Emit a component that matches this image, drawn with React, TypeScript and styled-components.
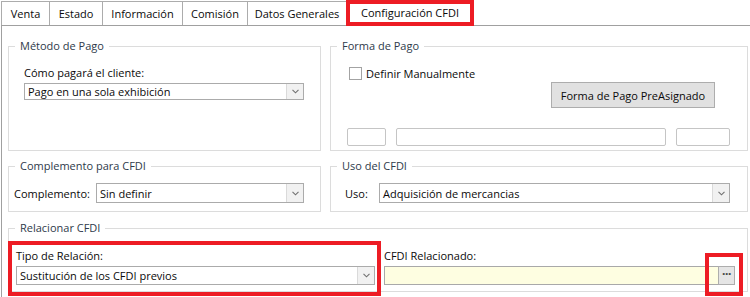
import * as React from "react";
import styled, { createGlobalStyle } from "styled-components";

const GlobalStyle = createGlobalStyle`
  html, body {
    margin: 0;
    padding: 0;
    background: #fff;
  }
  body {
    font-family: "Open Sans", "Noto Sans", sans-serif;
    font-size: 11px;
    color: #0a0a0a;
  }
`;

const ANNOTATION = "#ed1c24";

const Window = styled.div`
  width: 750px;
  height: 297px;
  overflow: hidden;
  padding-left: 1px;
  box-sizing: border-box;
`;

const TabBar = styled.div`
  display: flex;
  align-items: flex-end;
  height: 25px;
`;

const Tab = styled.div<{ $width: number; $active?: boolean }>`
  box-sizing: border-box;
  width: ${p => p.$width}px;
  text-align: center;
  white-space: nowrap;
  background: #fff;
  & + & {
    margin-left: -1px;
  }
  ${p =>
    p.$active
      ? `
    position: relative;
    height: 26px;
    margin-bottom: -1px;
    border: 4px solid ${ANNOTATION};
    line-height: 18px;
  `
      : `
    height: 24px;
    border: 1px solid #acacac;
    border-bottom: none;
    line-height: 24px;
  `}
`;

const Panel = styled.div`
  border-top: 1px solid #a0a0a0;
  border-left: 1px solid #a0a0a0;
  height: 280px;
  padding: 20px 0 0 6px;
  display: grid;
  grid-template-columns: 313px 418px;
  grid-template-rows: 105px 46px 65px;
  column-gap: 9px;
  row-gap: 15px;
  align-content: start;
`;

const Group = styled.section<{ $span?: boolean }>`
  box-sizing: border-box;
  border: 1px solid #dcdcdc;
  display: flex;
  flex-direction: column;
  min-width: 0;
  ${p => p.$span && "grid-column: 1 / -1; margin-top: 1px;"}
`;

const Legend = styled.span`
  align-self: flex-start;
  margin: -8px 0 0 6px;
  padding: 0 5px;
  height: 14px;
  line-height: 14px;
  background: #fff;
  color: #2e3a4a;
`;

const Body = styled.div<{ $pl: number; $pr: number }>`
  padding: 0 ${p => p.$pr}px 0 ${p => p.$pl}px;
  display: flex;
  flex-direction: column;
`;

const FieldLabel = styled.label<{ $top?: number }>`
  display: block;
  line-height: 15px;
  height: 15px;
  margin-top: ${p => p.$top ?? 0}px;
  white-space: nowrap;
`;

const InlineLabel = styled.label<{ $width: number }>`
  width: ${p => p.$width}px;
  flex: none;
  white-space: nowrap;
`;

const SelectBox = styled.div<{ $height?: number; $top?: number }>`
  display: flex;
  flex: 1;
  box-sizing: border-box;
  height: ${p => p.$height ?? 19}px;
  margin-top: ${p => p.$top ?? 0}px;
  border: 1px solid #ababab;
  background: #fff;
`;

const SelectValue = styled.span`
  flex: 1;
  padding-left: 3px;
  display: flex;
  align-items: center;
  white-space: nowrap;
  overflow: hidden;
`;

const SelectArrow = styled.span`
  width: 16px;
  border-left: 1px solid #dadada;
  background: #f1f1f1;
  display: flex;
  align-items: center;
  justify-content: center;
`;

const Chevron = () => (
  <svg width="7" height="5" viewBox="0 0 7 5">
    <polyline points="0.5,0.8 3.5,3.8 6.5,0.8" fill="none" stroke="#707070" strokeWidth="1.1" />
  </svg>
);

const Select: React.FC<{ value: string; height?: number; top?: number }> = ({ value, height, top }) => (
  <SelectBox $height={height} $top={top}>
    <SelectValue>{value}</SelectValue>
    <SelectArrow>
      <Chevron />
    </SelectArrow>
  </SelectBox>
);

const InlineRow = styled.div<{ $pl: number; $pr: number }>`
  display: flex;
  align-items: center;
  margin-top: 10px;
  padding: 0 ${p => p.$pr}px 0 ${p => p.$pl}px;
`;

const CheckRow = styled.div`
  display: flex;
  align-items: center;
  height: 13px;
  margin: 14px 0 0 18px;
`;

const CheckBox = styled.span`
  box-sizing: border-box;
  width: 13px;
  height: 13px;
  border: 1px solid #a3a3a3;
  background: #fff;
  margin-right: 4px;
`;

const ButtonRow = styled.div`
  display: flex;
  justify-content: flex-end;
  margin: 2px 32px 0 0;
`;

const PushButton = styled.button`
  box-sizing: border-box;
  width: 164px;
  height: 26px;
  padding: 0;
  border: 1px solid #adadad;
  background: #e1e1e1;
  font: inherit;
  color: #0a0a0a;
`;

const SmallInputs = styled.div`
  display: flex;
  gap: 10px;
  margin: 20px 0 0 16px;
`;

const TextBox = styled.span<{ $width: number }>`
  box-sizing: border-box;
  width: ${p => p.$width}px;
  height: 18px;
  border: 1px solid #c5c5c5;
  border-radius: 2px;
  background: #fff;
`;

const FieldsRow = styled.div`
  display: flex;
  gap: 9px;
  margin: 13px 12px 0 7px;
`;

const Field = styled.div<{ $width?: number; $marked?: boolean }>`
  position: relative;
  display: flex;
  flex-direction: column;
  ${p => (p.$width ? `width: ${p.$width}px; flex: none;` : "flex: 1;")}
  ${p =>
    p.$marked &&
    `
    &::after {
      content: "";
      position: absolute;
      top: -7px;
      left: -8px;
      right: -6px;
      bottom: -11px;
      border: 4px solid ${ANNOTATION};
      pointer-events: none;
    }
  `}
`;

const LookupRow = styled.div`
  display: flex;
  height: 19px;
  margin-top: 3px;
`;

const LookupInput = styled.span`
  flex: 1;
  box-sizing: border-box;
  border: 1px solid #a9a9a9;
  border-right: none;
  background: #fefee1;
`;

const LookupButton = styled.button`
  position: relative;
  box-sizing: border-box;
  width: 17px;
  padding: 0 0 3px;
  border: 1px solid #adadad;
  background: #e5e5e5;
  font: inherit;
  font-size: 12px;
  font-weight: 700;
  line-height: 12px;
  color: #444;
  letter-spacing: -0.5px;
  &::after {
    content: "";
    position: absolute;
    top: -14px;
    left: -14px;
    right: -9px;
    bottom: -12px;
    border: 4px solid ${ANNOTATION};
    pointer-events: none;
  }
`;

const tabs: { label: string; width: number; active?: boolean }[] = [
  { label: "Venta", width: 49 },
  { label: "Estado", width: 54 },
  { label: "Información", width: 81 },
  { label: "Comisión", width: 66 },
  { label: "Datos Generales", width: 100 },
  { label: "Configuración CFDI", width: 128, active: true },
];

export default function App() {
  return (
    <>
      <GlobalStyle />
      <Window>
        <TabBar>
          {tabs.map(t => (
            <Tab key={t.label} $width={t.width} $active={t.active}>
              {t.label}
            </Tab>
          ))}
        </TabBar>
        <Panel>
          <Group>
            <Legend>Método de Pago</Legend>
            <Body $pl={15} $pr={16}>
              <FieldLabel $top={12}>Cómo pagará el cliente:</FieldLabel>
              <Select value="Pago en una sola exhibición" top={3} />
            </Body>
          </Group>

          <Group>
            <Legend>Forma de Pago</Legend>
            <CheckRow>
              <CheckBox />
              <span>Definir Manualmente</span>
            </CheckRow>
            <ButtonRow>
              <PushButton>Forma de Pago PreAsignado</PushButton>
            </ButtonRow>
            <SmallInputs>
              <TextBox $width={39} />
              <TextBox $width={270} />
              <TextBox $width={54} />
            </SmallInputs>
          </Group>

          <Group>
            <Legend>Complemento para CFDI</Legend>
            <InlineRow $pl={5} $pr={16}>
              <InlineLabel $width={82}>Complemento:</InlineLabel>
              <Select value="Sin definir" height={20} />
            </InlineRow>
          </Group>

          <Group>
            <Legend>Uso del CFDI</Legend>
            <InlineRow $pl={14} $pr={17}>
              <InlineLabel $width={34}>Uso:</InlineLabel>
              <Select value="Adquisición de mercancias" height={20} />
            </InlineRow>
          </Group>

          <Group $span>
            <Legend>Relacionar CFDI</Legend>
            <FieldsRow>
              <Field $width={359} $marked>
                <FieldLabel>Tipo de Relación:</FieldLabel>
                <Select value="Sustitución de los CFDI previos" top={3} />
              </Field>
              <Field>
                <FieldLabel>CFDI Relacionado:</FieldLabel>
                <LookupRow>
                  <LookupInput />
                  <LookupButton>···</LookupButton>
                </LookupRow>
              </Field>
            </FieldsRow>
          </Group>
        </Panel>
      </Window>
    </>
  );
}
